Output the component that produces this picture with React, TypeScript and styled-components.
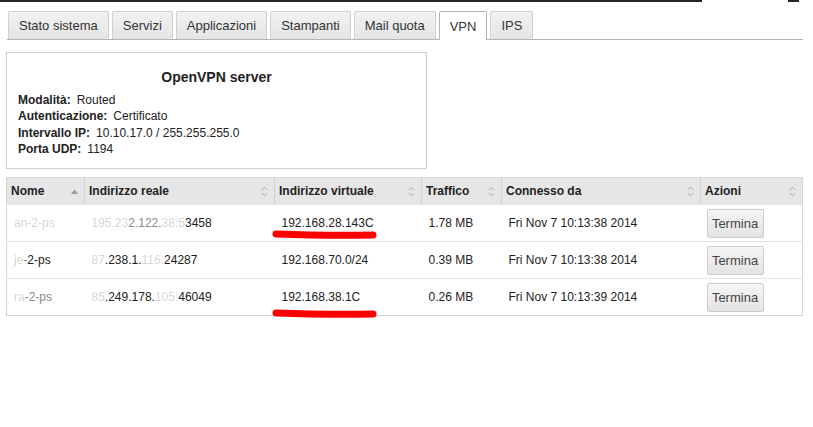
import styled, { createGlobalStyle } from 'styled-components';

const GlobalStyle = createGlobalStyle`
  html, body {
    margin: 0;
    padding: 0;
    background: #fff;
  }
  body {
    font-family: 'Liberation Sans', Arial, sans-serif;
    font-size: 12px;
    color: #222;
  }
`;

type Part = { t: string; tone?: 'light' | 'mid' };

const tabs = ['Stato sistema', 'Servizi', 'Applicazioni', 'Stampanti', 'Mail quota', 'VPN', 'IPS'];

const info = [
  { label: 'Modalità:', value: 'Routed' },
  { label: 'Autenticazione:', value: 'Certificato' },
  { label: 'Intervallo IP:', value: '10.10.17.0 / 255.255.255.0' },
  { label: 'Porta UDP:', value: '1194' },
];

const columns = [
  { title: 'Nome', width: 78, sort: 'asc' },
  { title: 'Indirizzo reale', width: 190, sort: 'both' },
  { title: 'Indirizzo virtuale', width: 147, sort: 'both' },
  { title: 'Traffico', width: 80, sort: 'both' },
  { title: 'Connesso da', width: 199, sort: 'both' },
  { title: 'Azioni', width: 102, sort: 'both' },
];

const rows: {
  name: Part[];
  real: Part[];
  virtual: string;
  mark?: number;
  traffic: string;
  since: string;
}[] = [
  {
    name: [{ t: 'an-2-ps', tone: 'light' }],
    real: [
      { t: '195.2', tone: 'light' },
      { t: '3', tone: 'light' },
      { t: '2.122.', tone: 'mid' },
      { t: '38:5', tone: 'light' },
      { t: '3458' },
    ],
    virtual: '192.168.28.143C',
    mark: 24,
    traffic: '1.78 MB',
    since: 'Fri Nov 7 10:13:38 2014',
  },
  {
    name: [{ t: 'je', tone: 'light' }, { t: '-', tone: 'mid' }, { t: '2-ps' }],
    real: [{ t: '87', tone: 'light' }, { t: '.238.1.' }, { t: '116.', tone: 'light' }, { t: '24287' }],
    virtual: '192.168.70.0/24',
    traffic: '0.39 MB',
    since: 'Fri Nov 7 10:13:38 2014',
  },
  {
    name: [{ t: 'ra', tone: 'light' }, { t: '-2-ps', tone: 'mid' }],
    real: [{ t: '85', tone: 'light' }, { t: '.249.178.' }, { t: '105:', tone: 'light' }, { t: '46049' }],
    virtual: '192.168.38.1C',
    mark: 29,
    traffic: '0.26 MB',
    since: 'Fri Nov 7 10:13:39 2014',
  },
];

const SortIcon = ({ kind }: { kind: string }) =>
  kind === 'asc' ? (
    <svg width="7" height="5" viewBox="0 0 7 5">
      <path d="M0 5 L3.5 0.5 L7 5 Z" fill="#9a9a9a" />
    </svg>
  ) : (
    <svg width="7" height="11" viewBox="0 0 7 11">
      <path d="M0.8 4 L3.5 1.2 L6.2 4 M0.8 7 L3.5 9.8 L6.2 7" fill="none" stroke="#a8a8a8" strokeWidth="1" />
    </svg>
  );

const Mark = ({ top }: { top: number }) => (
  <MarkSvg style={{ top }} width="106" height="12" viewBox="0 0 106 12">
    <path d="M4 5 C30 6, 60 7, 101 6" fill="none" stroke="#ff0000" strokeWidth="7" strokeLinecap="round" />
  </MarkSvg>
);

const Masked = ({ parts }: { parts: Part[] }) => (
  <>
    {parts.map((p, i) => (
      <Piece key={i} $tone={p.tone}>
        {p.t}
      </Piece>
    ))}
  </>
);

const App = () => {
  return (
    <>
      <GlobalStyle />
      <Page>
        <Main>
          <TopBar>
            <span className="left" />
            <span className="right" />
          </TopBar>
          <TabBar>
            {tabs.map((t) => (
              <Tab key={t} $active={t === 'VPN'}>
                {t}
              </Tab>
            ))}
          </TabBar>
          <InfoBox>
            <h2>OpenVPN server</h2>
            {info.map((i) => (
              <InfoLine key={i.label}>
                <b>{i.label}</b>
                <span>{i.value}</span>
              </InfoLine>
            ))}
          </InfoBox>
          <Table>
            <colgroup>
              {columns.map((c) => (
                <col key={c.title} style={{ width: c.width }} />
              ))}
            </colgroup>
            <thead>
              <tr>
                {columns.map((c) => (
                  <HeadCell key={c.title}>
                    <div>
                      <span>{c.title}</span>
                      <SortIcon kind={c.sort} />
                    </div>
                  </HeadCell>
                ))}
              </tr>
            </thead>
            <tbody>
              {rows.map((r, i) => (
                <Row key={i}>
                  <Cell>
                    <Masked parts={r.name} />
                  </Cell>
                  <Cell>
                    <Masked parts={r.real} />
                  </Cell>
                  <Cell className="virtual">
                    {r.virtual}
                    {r.mark !== undefined && <Mark top={r.mark} />}
                  </Cell>
                  <Cell>{r.traffic}</Cell>
                  <Cell>{r.since}</Cell>
                  <Cell className="action">
                    <Button>Termina</Button>
                  </Cell>
                </Row>
              ))}
            </tbody>
          </Table>
        </Main>
        <Scrollbar>
          <div />
        </Scrollbar>
      </Page>
    </>
  );
};

const Page = styled.div`
  width: 813px;
  height: 427px;
  display: flex;
  overflow: hidden;
  background: #fff;
`;

const Main = styled.div`
  flex: 1;
  display: flex;
  flex-direction: column;
`;

const TopBar = styled.div`
  display: flex;
  height: 2px;
  span {
    background: #262626;
    height: 2px;
  }
  .left {
    width: 702px;
  }
  .right {
    width: 11px;
    margin-left: 86px;
  }
`;

const TabBar = styled.div`
  display: flex;
  gap: 3px;
  margin: 9px 7px 0 7px;
  padding-left: 1px;
  height: 28px;
  border-bottom: 1px solid #b4b4b4;
  width: 795px;
`;

const Tab = styled.div<{ $active?: boolean }>`
  box-sizing: border-box;
  padding: 0 10px;
  display: flex;
  align-items: center;
  font-size: 13px;
  color: #333;
  border: 1px solid ${(p) => (p.$active ? '#b4b4b4' : '#d0d0d0')};
  border-bottom: none;
  background: ${(p) => (p.$active ? '#fff' : 'linear-gradient(#f2f2f2, #e4e4e4)')};
  border-radius: 2px 2px 0 0;
  margin-bottom: ${(p) => (p.$active ? '-1px' : '0')};
  height: ${(p) => (p.$active ? '29px' : '28px')};
`;

const InfoBox = styled.div`
  margin: 12px 0 0 6px;
  width: 421px;
  height: 117px;
  box-sizing: border-box;
  border: 1px solid #cfcfcf;
  padding: 15px 11px 0;
  h2 {
    margin: 0 0 6px;
    text-align: center;
    font-size: 14px;
    font-weight: bold;
    color: #222;
    line-height: 18px;
  }
`;

const InfoLine = styled.div`
  display: flex;
  gap: 6px;
  line-height: 16.4px;
  font-size: 12px;
  color: #222;
  b {
    font-weight: bold;
  }
`;

const Table = styled.table`
  margin: 8px 0 0 6px;
  width: 796px;
  border-collapse: collapse;
  table-layout: fixed;
  border: 1px solid #d4d4d4;
  border-top: none;
`;

const HeadCell = styled.th`
  height: 26px;
  padding: 0 6px 0 4px;
  background: #e6e6e6;
  border-left: 1px solid #d2d2d2;
  border-top: 1px solid #d8d8d8;
  text-align: left;
  font-size: 12px;
  font-weight: bold;
  color: #222;
  &:first-child {
    border-left: none;
  }
  div {
    display: flex;
    align-items: center;
    justify-content: space-between;
  }
`;

const Row = styled.tr`
  height: 37px;
  border-top: 1px solid #e2e2e2;
`;

const Cell = styled.td`
  padding: 0 7px;
  font-size: 12px;
  color: #222;
  white-space: nowrap;
  &.virtual {
    position: relative;
  }
  &.action {
    padding-left: 6px;
  }
`;

const Piece = styled.span<{ $tone?: 'light' | 'mid' }>`
  color: ${(p) => (p.$tone === 'light' ? '#d6d6d6' : p.$tone === 'mid' ? '#8a8a8a' : '#222')};
  filter: ${(p) => (p.$tone === 'light' ? 'blur(0.5px)' : 'none')};
`;

const MarkSvg = styled.svg`
  position: absolute;
  left: -3px;
`;

const Button = styled.button`
  width: 57px;
  height: 29px;
  border: 1px solid #cdcdcd;
  border-radius: 2px;
  background: linear-gradient(#f5f5f5, #e3e3e3);
  font-family: 'Liberation Sans', Arial, sans-serif;
  font-size: 13px;
  color: #444;
  padding: 0;
`;

const Scrollbar = styled.div`
  width: 4px;
  margin-left: 7px;
  background: #efefef;
  div {
    margin-left: 1px;
    width: 3px;
    height: 178px;
    background: #cfcfcf;
  }
`;

export default App;
